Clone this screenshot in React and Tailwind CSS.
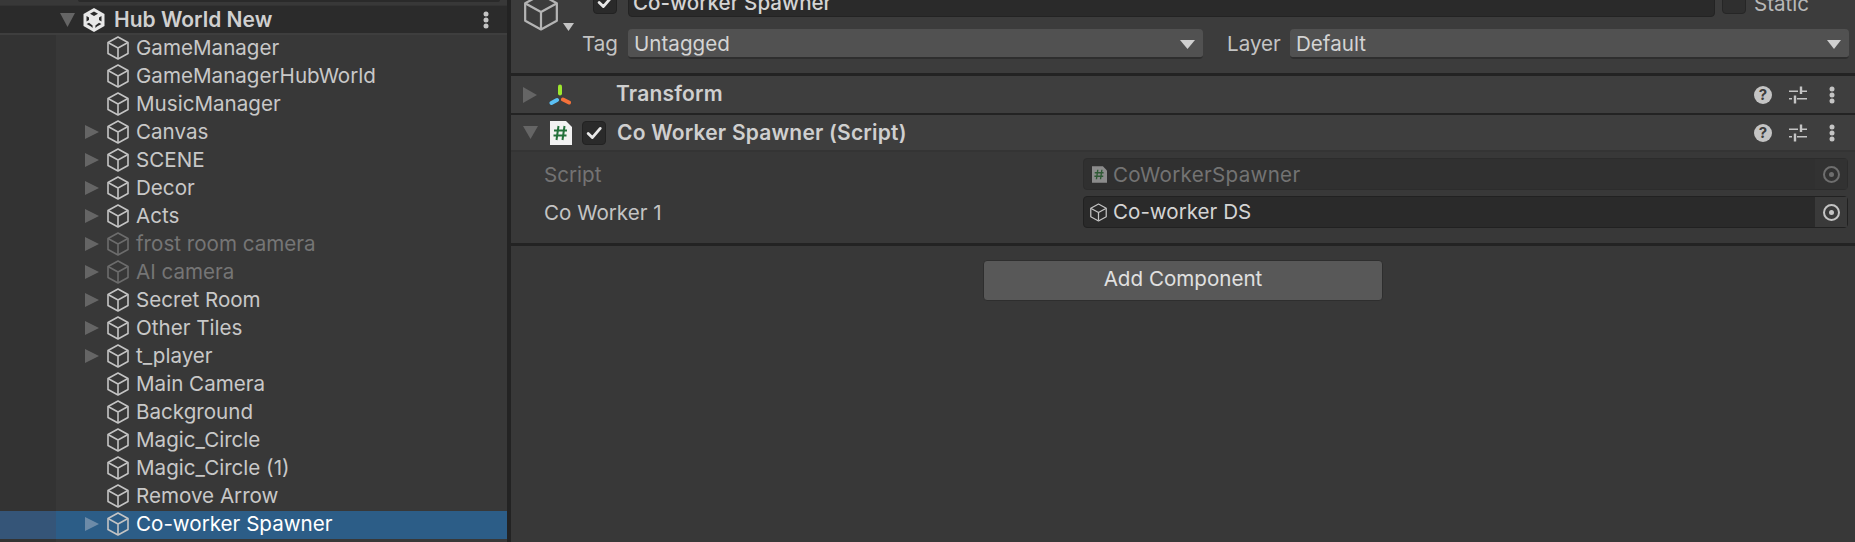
import React from 'react';

const rows = [
  { name: 'GameManager' },
  { name: 'GameManagerHubWorld' },
  { name: 'MusicManager' },
  { name: 'Canvas', arrow: true },
  { name: 'SCENE', arrow: true },
  { name: 'Decor', arrow: true },
  { name: 'Acts', arrow: true },
  { name: 'frost room camera', arrow: true, dim: true },
  { name: 'AI camera', arrow: true, dim: true },
  { name: 'Secret Room', arrow: true },
  { name: 'Other Tiles', arrow: true },
  { name: 't_player', arrow: true },
  { name: 'Main Camera' },
  { name: 'Background' },
  { name: 'Magic_Circle' },
  { name: 'Magic_Circle (1)' },
  { name: 'Remove Arrow' },
  { name: 'Co-worker Spawner', arrow: true, selected: true },
];

function Cube({ className, strokeWidth = 1.6 }) {
  return (
    <svg viewBox="0 0 22 24" fill="none" stroke="currentColor" strokeWidth={strokeWidth} strokeLinejoin="round" className={className}>
      <path d="M11 1 L21 6.5 V17.5 L11 23 L1 17.5 V6.5 Z" />
      <path d="M1.5 6.8 L11 12 L20.5 6.8 M11 12 V22.5" />
    </svg>
  );
}

function UnityLogo() {
  return (
    <svg viewBox="0 0 22 24" className="w-[22px] h-6 shrink-0 text-[#e8e8e8]">
      <path fill="currentColor" d="M11 0 L21.5 6 V18 L11 24 L0.5 18 V6 Z" />
      <path fill="#2a2a2a" d="M11 3.5 L7 5.8 L11 8 L15 5.8 Z M3.5 8 V13.5 L6 12 V9.5 Z M18.5 8 V13.5 L16 12 V9.5 Z M3.6 16 L8 18.6 L9.6 20 V17.5 L6 14.7 Z M18.4 16 L14 18.6 L12.4 20 V17.5 L16 14.7 Z" />
    </svg>
  );
}

function Triangle({ dir = 'right', className }) {
  const d = dir === 'right' ? 'M0 0 L14 8 L0 16 Z' : 'M0 0 H16 L8 14 Z';
  return (
    <svg viewBox={dir === 'right' ? '0 0 14 16' : '0 0 16 14'} preserveAspectRatio="none" className={className} fill="currentColor">
      <path d={d} />
    </svg>
  );
}

function Check({ className }) {
  return (
    <svg viewBox="0 0 24 24" fill="none" stroke="currentColor" strokeWidth="3.4" strokeLinecap="round" strokeLinejoin="round" className={className}>
      <path d="M5 12.5 L10 17.5 L19.5 6.5" />
    </svg>
  );
}

function Dots({ className }) {
  return (
    <svg viewBox="0 0 6 18" fill="currentColor" className={className}>
      <circle cx="3" cy="3" r="2.5" />
      <circle cx="3" cy="9" r="2.5" />
      <circle cx="3" cy="15" r="2.5" />
    </svg>
  );
}

function Sliders() {
  return (
    <svg viewBox="0 0 18 18" fill="none" stroke="#c4c4c4" className="w-[18px] h-[18px]">
      <path strokeWidth="1.5" d="M0 5.2 H9 M13 5.2 H18 M0 12.8 H3 M8 12.8 H18" />
      <path strokeWidth="2.4" d="M12 0.5 V8 M6 9.5 V17.5" />
    </svg>
  );
}

function ScriptIcon({ className, dim }) {
  return (
    <svg viewBox="0 0 22 24" className={className}>
      <path fill={dim ? '#8c8c8c' : '#f2f2f2'} d="M0 0 H16 L22 6 V24 H0 Z" />
      <path stroke={dim ? '#2f5a35' : '#22703a'} strokeWidth="2" fill="none" d="M8.5 5 L6.5 19 M14.5 5 L12.5 19 M4 9.5 H17 M3.5 14.5 H16.5" />
    </svg>
  );
}

function TransformIcon() {
  return (
    <svg viewBox="0 0 22 22" fill="none" strokeWidth="4" strokeLinecap="round" className="w-[22px] h-[22px]">
      <path stroke="#9ee82e" d="M11 2.5 V9.5" />
      <path stroke="#5bc0f5" d="M2.5 19 L8 16" />
      <path stroke="#f5713a" d="M14 15.5 L20 18.5" />
    </svg>
  );
}

function Picker({ dim }) {
  return (
    <div className={`w-8 self-stretch flex items-center justify-center ${dim ? 'bg-[#323232]' : 'bg-[#3a3a3a]'}`}>
      <div className={`w-[17px] h-[17px] rounded-full border-2 flex items-center justify-center ${dim ? 'border-[#6e6e6e]' : 'border-[#c4c4c4]'}`}>
        <div className={`w-[5px] h-[5px] rounded-full ${dim ? 'bg-[#6e6e6e]' : 'bg-[#c4c4c4]'}`} />
      </div>
    </div>
  );
}

function TreeRow({ name, arrow, dim, selected }) {
  return (
    <div className="flex h-7">
      <div className={`w-14 shrink-0 ${selected ? 'bg-[#355578]' : 'bg-[#333333]'}`} />
      <div className={`flex-1 flex items-center pb-[2px] ${selected ? 'bg-[#2c5d87]' : ''}`}>
        <div className="w-[29px] pl-[29px] shrink-0 relative">
          {arrow && (
            <Triangle className={`absolute left-[29px] top-[-7px] w-[14px] h-[14px] ${selected ? 'text-[#6d8ba8]' : 'text-[#656565]'}`} />
          )}
        </div>
        <div className="w-[22px] ml-[22px] shrink-0" />
        <Cube className={`w-[22px] h-6 shrink-0 -ml-[22px] ${dim ? 'text-[#6c6c6c]' : 'text-[#c4c4c4]'}`} />
        <span className={`ml-[7px] ${dim ? 'text-[#757575]' : selected ? 'text-white' : 'text-[#c8c8c8]'}`}>{name}</span>
      </div>
    </div>
  );
}

function Hierarchy() {
  return (
    <div className="w-[507px] shrink-0 flex flex-col bg-[#383838]">
      <div className="h-[5px] pl-[78px] pr-[7px] bg-[#383838]">
        <div className="h-[2px] bg-[#2a2a2a] rounded-b" />
      </div>
      <div className="h-[30px] flex items-center bg-[#2b2b2b] border-b-2 border-[#3e3e3e] border-t border-t-[#333333]">
        <Triangle dir="down" className="ml-[60px] w-[15px] h-[14px] text-[#656565]" />
        <div className="ml-[8px]"><UnityLogo /></div>
        <span className="ml-[9px] text-[21px] font-semibold text-[#d0d0d0]">Hub World New</span>
        <Dots className="ml-auto mr-[18px] w-[6px] h-[18px] text-[#c4c4c4]" />
      </div>
      {rows.map((r) => (
        <TreeRow key={r.name} {...r} />
      ))}
      <div className="flex flex-1">
        <div className="w-14 bg-[#333333]" />
      </div>
    </div>
  );
}

function ComponentHeader({ title, icon, checkbox, open, height, titleClass }) {
  return (
    <div className={`flex items-center bg-[#3e3e3e] pl-3 pr-5 ${height}`}>
      <Triangle dir={open ? 'down' : 'right'} className={open ? 'w-[15px] h-[13px] text-[#656565]' : 'w-[14px] h-4 text-[#656565]'} />
      <div className="ml-[12px]">{icon}</div>
      {checkbox ? (
        <div className="ml-[10px] w-6 h-6 rounded bg-[#2a2a2a] border border-[#222222] flex items-center justify-center">
          <Check className="w-5 h-5 text-[#e8e8e8]" />
        </div>
      ) : (
        <div className="w-[34px]" />
      )}
      <span className={`ml-[11px] text-[21px] tracking-[0.2px] font-semibold text-[#cfcfcf] ${titleClass}`}>{title}</span>
      <div className="ml-auto flex items-center">
        <div className="w-[18px] h-[18px] rounded-full bg-[#c4c4c4] flex items-center justify-center text-[15px] leading-none font-bold text-[#3c3c3c]">?</div>
        <div className="ml-[17px]"><Sliders /></div>
        <Dots className="ml-[22px] w-[6px] h-[18px] text-[#c4c4c4]" />
      </div>
    </div>
  );
}

function Inspector() {
  return (
    <div className="flex-1 flex flex-col bg-[#383838] min-w-0">
      {/* game object header, scrolled partly out of view */}
      <div className="h-[73px] pb-[14px] flex items-end overflow-hidden bg-[#3c3c3c]">
        <div className="flex items-end pl-3 w-[71px] shrink-0 mb-[28px]">
          <Cube className="w-9 h-[38px] shrink-0 text-[#b4b4b4]" strokeWidth={1.4} />
          <Triangle dir="down" className="ml-1 w-[11px] h-[8px] shrink-0 text-[#c4c4c4]" />
        </div>
        <div className="flex-1 flex flex-col gap-3 min-w-0">
          <div className="h-[30px] flex items-center pl-[11px] pr-[6px]">
            <div className="w-6 h-6 rounded bg-[#2a2a2a] border border-[#222222] flex items-center justify-center">
              <Check className="w-5 h-5 text-[#e8e8e8]" />
            </div>
            <div className="ml-[11px] w-[1087px] h-[30px] rounded-[4px] bg-[#2a2a2a] border border-[#232323] flex items-center pl-[4px] pt-[2px] text-[#d4d4d4] font-medium">Co-worker Spawner</div>
            <div className="ml-[7px] w-6 h-6 rounded bg-[#2f2f2f] border border-[#262626]" />
            <span className="ml-2 mt-[3px] text-[#b8b8b8]">Static</span>
            <Triangle dir="down" className="ml-auto mr-[3px] -mt-[24px] w-[13px] h-[10px] text-[#c4c4c4]" />
          </div>
          <div className="h-[30px] flex items-center pr-[6px]">
            <span className="w-[46px] shrink-0 text-[#c4c4c4]">Tag</span>
            <div className="w-[575px] h-[30px] rounded-[4px] bg-[#515151] border-b-2 border-[#2e2e2e] flex items-center pl-[6px] pt-[2px] pr-[8px] text-[#d4d4d4]">
              Untagged
              <Triangle dir="down" className="ml-auto w-[15px] h-[9px] text-[#d0d0d0]" />
            </div>
            <span className="ml-6 w-[63px] shrink-0 text-[#c4c4c4]">Layer</span>
            <div className="flex-1 h-[30px] rounded-[4px] bg-[#515151] border-b-2 border-[#2e2e2e] flex items-center pl-[6px] pt-[2px] pr-[8px] text-[#d4d4d4]">
              Default
              <Triangle dir="down" className="ml-auto w-[14px] h-[9px] text-[#d0d0d0]" />
            </div>
          </div>
        </div>
      </div>
      <div className="h-[3px] bg-[#232323]" />
      <ComponentHeader title="Transform" icon={<TransformIcon />} height="h-[37px]" titleClass="-mt-[2px]" />
      <div className="h-[2px] bg-[#232323]" />
      <ComponentHeader
        title="Co Worker Spawner (Script)"
        icon={<ScriptIcon className="w-[22px] h-6" />}
        checkbox
        open
        height="h-[35px]"
      />
      <div className="h-[2px] bg-[#343434]" />
      {/* properties */}
      <div className="pt-[6px] pb-[15px] pl-[33px] pr-[7px] flex flex-col gap-[6px]">
        <div className="flex items-center h-8">
          <span className="w-[539px] shrink-0 pt-px text-[#737373]">Script</span>
          <div className="flex-1 h-8 rounded-[4px] bg-[#303030] border border-[#2c2c2c] flex items-center text-[#737373]">
            <ScriptIcon dim className="ml-2 w-[15px] h-[17px]" />
            <span className="ml-[6px] pt-px tracking-[0.3px]">CoWorkerSpawner</span>
            <div className="ml-auto self-stretch flex"><Picker dim /></div>
          </div>
        </div>
        <div className="flex items-center h-8">
          <span className="w-[539px] shrink-0 pt-px text-[#c4c4c4]">Co Worker 1</span>
          <div className="flex-1 h-8 rounded-[4px] bg-[#2a2a2a] border border-[#212121] flex items-center text-[#d4d4d4]">
            <Cube className="ml-[6px] w-[17px] h-[19px] text-[#c4c4c4]" strokeWidth={1.6} />
            <span className="ml-[6px]">Co-worker DS</span>
            <div className="ml-auto self-stretch flex"><Picker /></div>
          </div>
        </div>
      </div>
      <div className="h-[3px] bg-[#232323]" />
      <div className="flex justify-center pt-[14px]">
        <div className="w-[400px] h-[41px] rounded-[4px] bg-[#585858] border border-[#2e2e2e] flex items-center justify-center pb-[3px] text-[#e0e0e0]">Add Component</div>
      </div>
    </div>
  );
}

export default function App() {
  return (
    <div className="w-[1855px] h-[542px] overflow-hidden flex bg-[#383838] font-['Inter',sans-serif] text-[20.6px] leading-7">
      <Hierarchy />
      <div className="w-1 shrink-0 bg-[#232323]" />
      <Inspector />
    </div>
  );
}
